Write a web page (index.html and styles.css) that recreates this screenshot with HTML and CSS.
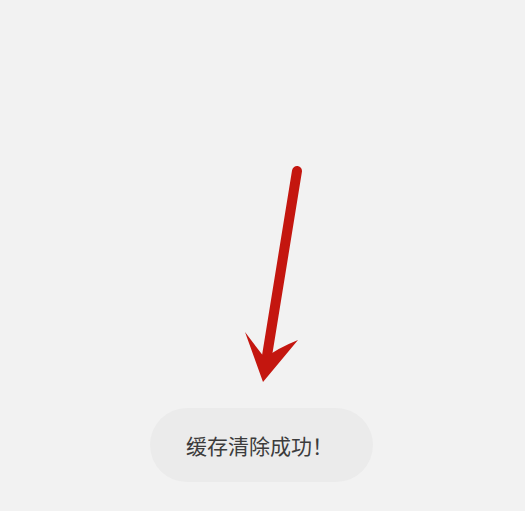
FILE: index.html
```html
<!DOCTYPE html>
<html lang="zh-CN">
<head>
<meta charset="utf-8">
<link rel="stylesheet" href="styles.css">
</head>
<body>
<div class="screen">
  <svg class="arrow" width="525" height="511" viewBox="0 0 525 511" aria-hidden="true">
    <line x1="297" y1="171" x2="266" y2="362" stroke="#c4160f" stroke-width="10" stroke-linecap="round"/>
    <path d="M263 382 L245 332 Q257 348 265 358 Q278 348 298 340 Z" fill="#c4160f"/>
  </svg>
  <div class="toast">缓存清除成功！</div>
</div>
</body>
</html>
```
FILE: styles.css
```css
html, body {
  margin: 0;
  padding: 0;
  background: #f2f2f2;
}
.screen {
  position: relative;
  width: 525px;
  height: 511px;
  display: flex;
  justify-content: center;
  align-items: flex-end;
  padding-bottom: 29px;
  box-sizing: border-box;
}
.arrow {
  position: absolute;
  left: 0;
  top: 0;
}
.toast {
  width: 223px;
  height: 74px;
  box-sizing: border-box;
  padding-left: 36px;
  border-radius: 37px;
  background: #ebebeb;
  color: #3c3c3c;
  font-family: "Noto Sans CJK SC", sans-serif;
  font-size: 21px;
  display: flex;
  align-items: center;
  margin-right: 2px;
}
```
